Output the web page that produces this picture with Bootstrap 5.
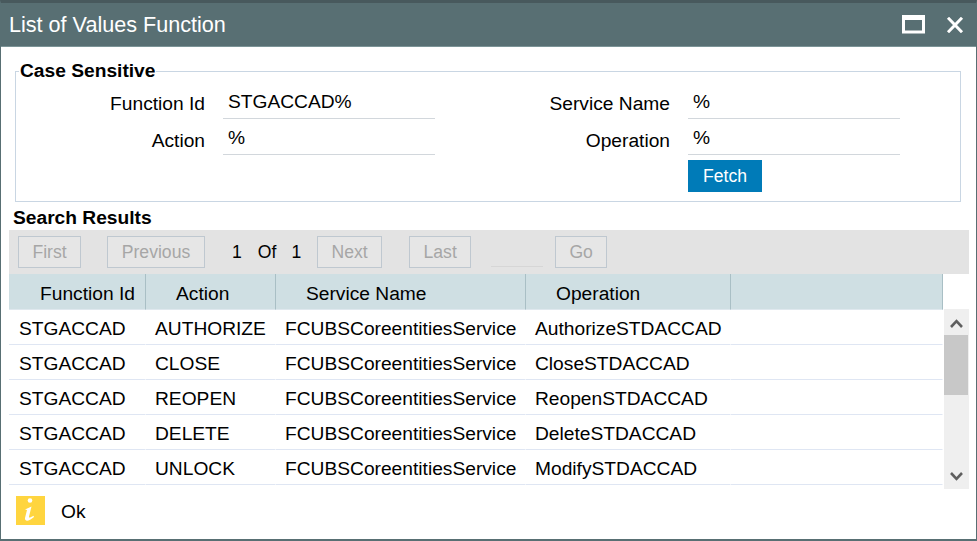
<!DOCTYPE html>
<html lang="en">
<head>
<meta charset="utf-8">
<title>List of Values Function</title>
<link href="https://cdn.jsdelivr.net/npm/bootstrap@5.3.0/dist/css/bootstrap.min.css" rel="stylesheet">
<style>
html, body { margin: 0; height: 541px; overflow: hidden; background: #fff; }
body { font-family: "Liberation Sans", Arial, sans-serif; font-size: 19.2px; color: #000; line-height: 20px; }
.lov-win { width: 977px; height: 541px; border: solid #586f73; border-width: 3px 1px 2px 1px; border-top-color: #48595d; display: flex; flex-direction: column; }
.lov-head { height: 44px; flex: none; background: #586f73; border-bottom: 1px solid #7c9497; color: #fff; display: flex; align-items: center; padding: 0 12px 0 8px; }
.lov-title { font-size: 21.6px; flex: 1; }
.lov-fs { margin: 24px 15px 0 14px; height: 131px; border: 1px solid #c9d6e3; position: relative; padding: 19px 0 0; flex: none; }
.lov-legend { position: absolute; left: 3px; top: -11px; background: #fff; font-weight: 700; padding: 0 1px; line-height: 20px; }
.lov-form { width: 100%; }
.lov-line { height: 36px; display: flex; }
.lov-field { display: flex; }
.lov-lab { text-align: right; padding-top: 4px; }
.lov-line:first-child .lov-lab { padding-top: 3px; }
.lab-a { width: 189px; margin-right: 18px; }
.lab-b { width: 228px; margin-right: 18px; margin-left: 7px; }
.lov-val { width: 212px; height: 29px; border-bottom: 1.5px solid #d2d7dc; padding: 2px 0 0 5px; margin-top: -1px; }
.lov-fetch { display: block; margin: -3px 0 0 672px; width: 74px; height: 32px; border-radius: 0; border: 0; padding: 0; background: #007bb8; color: #fff; font-size: 17.6px; line-height: 32px; }
.lov-h { font-weight: 700; margin: 6px 0 0 12px; height: 20px; line-height: 20px; flex: none; }
.lov-tool { margin: 2px 7px 0 8px; height: 44px; background: #e3e3e3; display: flex; align-items: center; padding-left: 9px; flex: none; }
.lov-btn { height: 32px; border: 1px solid #bfc8d0; background: #e6e6e6; color: #a6a6a6; border-radius: 0; padding: 0; font-size: 17.6px; line-height: 30px; margin: 0; }
.lov-tool .lov-btn:disabled { opacity: 1; color: #a6a6a6; background: #e6e6e6; border-color: #bfc8d0; }
.lov-num { display: inline-block; font-size: 17.6px; }
.lov-page { width: 52px; height: 30px; border-bottom: 1px solid #d6d6d6; margin-left: 20px; margin-right: 12px; }
.lov-body { display: flex; margin-left: 8px; flex: none; align-items: flex-start; }
.lov-grid { width: 934px; border-collapse: separate; border-spacing: 0; table-layout: fixed; }
.lov-grid th { height: 36px; background: #cfdfe3; font-weight: 400; border-right: 1px solid #a9bfc5; border-bottom: 1px solid #dfe8ee; padding: 4px 0 0; vertical-align: middle; }
.lov-grid td { height: 35px; border-bottom: 1px solid #dfe6f3; border-right: 1px solid #fff; padding: 3px 0 0 9px; white-space: nowrap; overflow: visible; background: #fff; line-height: 20px; vertical-align: middle; }
.lov-grid td:first-child { padding-left: 10px; }
.lov-sb { width: 25px; margin: 35px 0 0 1px; height: 180px; background: #efefef; position: relative; flex: none; }
.lov-thumb { position: absolute; left: 0; top: 26px; width: 24px; height: 60px; background: #c8c8c8; }
.lov-arrow { position: absolute; left: 6px; width: 13px; height: 9px; }
.lov-foot { display: flex; align-items: center; margin: 7px 0 0 15px; }
.lov-ico { width: 29px; height: 29px; background: #ffd53f; display: block; margin-right: 16px; }
.lov-ok { padding-top: 2px; }
</style>
</head>
<body>
<div class="lov-win">
  <div class="lov-head">
    <div class="lov-title">List of Values Function</div>
    <svg width="23" height="19" viewBox="0 0 23 19" style="margin-right:21px"><path fill="#fff" fill-rule="evenodd" d="M0 0H23V18.500H0ZM3 5V15.500H20V5Z"/></svg>
    <svg width="18" height="16" viewBox="0 0 18 16"><path stroke="#fff" stroke-width="3" d="M2 0.800 16 15.200M16 0.800 2 15.200"/></svg>
  </div>

  <div class="lov-fs">
    <div class="lov-legend">Case Sensitive</div>
    <div class="lov-form">
      <div class="lov-line">
        <div class="lov-field"><div class="lov-lab lab-a">Function Id</div><div class="lov-val">STGACCAD%</div></div>
        <div class="lov-field"><div class="lov-lab lab-b">Service Name</div><div class="lov-val">%</div></div>
      </div>
      <div class="lov-line">
        <div class="lov-field"><div class="lov-lab lab-a">Action</div><div class="lov-val">%</div></div>
        <div class="lov-field"><div class="lov-lab lab-b">Operation</div><div class="lov-val">%</div></div>
      </div>
      <button type="button" class="btn lov-fetch">Fetch</button>
    </div>
  </div>

  <div class="lov-h">Search Results</div>
  <div class="lov-tool">
    <button type="button" class="btn lov-btn" style="width:63px" disabled>First</button>
    <button type="button" class="btn lov-btn" style="width:98px;margin-left:26px" disabled>Previous</button>
    <span class="lov-num" style="margin-left:27px">1</span>
    <span class="lov-num" style="margin-left:16px">Of</span>
    <span class="lov-num" style="margin-left:15px">1</span>
    <button type="button" class="btn lov-btn" style="width:65px;margin-left:16px" disabled>Next</button>
    <button type="button" class="btn lov-btn" style="width:62px;margin-left:27px" disabled>Last</button>
    <div class="lov-page"></div>
    <button type="button" class="btn lov-btn" style="width:52px" disabled>Go</button>
  </div>

  <div class="lov-body">
    <table class="lov-grid">
      <colgroup><col style="width:137px"><col style="width:130px"><col style="width:250px"><col style="width:205px"><col></colgroup>
      <thead>
        <tr>
          <th style="padding-left:31px">Function Id</th>
          <th style="padding-left:30px">Action</th>
          <th style="padding-left:30px">Service Name</th>
          <th style="padding-left:30px">Operation</th>
          <th></th>
        </tr>
      </thead>
      <tbody>
        <tr><td>STGACCAD</td><td>AUTHORIZE</td><td>FCUBSCoreentitiesService</td><td>AuthorizeSTDACCAD</td><td></td></tr>
        <tr><td>STGACCAD</td><td>CLOSE</td><td>FCUBSCoreentitiesService</td><td>CloseSTDACCAD</td><td></td></tr>
        <tr><td>STGACCAD</td><td>REOPEN</td><td>FCUBSCoreentitiesService</td><td>ReopenSTDACCAD</td><td></td></tr>
        <tr><td>STGACCAD</td><td>DELETE</td><td>FCUBSCoreentitiesService</td><td>DeleteSTDACCAD</td><td></td></tr>
        <tr><td>STGACCAD</td><td>UNLOCK</td><td>FCUBSCoreentitiesService</td><td>ModifySTDACCAD</td><td></td></tr>
      </tbody>
    </table>
    <div class="lov-sb">
      <svg class="lov-arrow" style="top:10px" viewBox="0 0 13 9"><path fill="none" stroke="#5f5f5f" stroke-width="2.600" d="M1 8 6.500 2.200 12 8"/></svg>
      <div class="lov-thumb"></div>
      <svg class="lov-arrow" style="top:163px" viewBox="0 0 13 9"><path fill="none" stroke="#5f5f5f" stroke-width="2.600" d="M1 1 6.500 6.800 12 1"/></svg>
    </div>
  </div>

  <div class="lov-foot">
    <svg class="lov-ico" viewBox="0 0 29 29"><circle cx="14" cy="4.500" r="2.300" fill="#fff"/><path fill="#fff" d="M9 13.500 15.500 10.500 13 20.500C12.700 22 14 22 17.500 19.800L18 21C13 25.500 8.500 26 9 22L11 14Z"/></svg>
    <span class="lov-ok">Ok</span>
  </div>
</div>
</body>
</html>
